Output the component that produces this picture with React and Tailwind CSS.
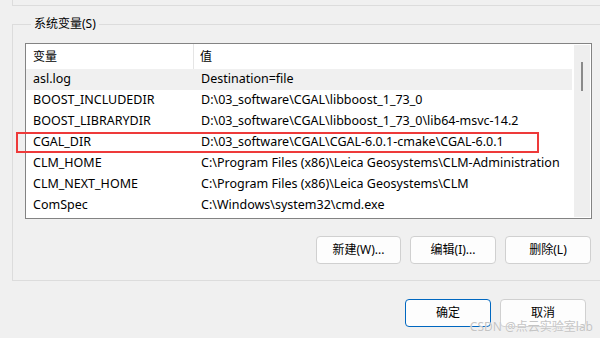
import React from "react";

const rows = [
  { name: "asl.log", value: "Destination=file", selected: true },
  { name: "BOOST_INCLUDEDIR", value: "D:\\03_software\\CGAL\\libboost_1_73_0" },
  { name: "BOOST_LIBRARYDIR", value: "D:\\03_software\\CGAL\\libboost_1_73_0\\lib64-msvc-14.2" },
  { name: "CGAL_DIR", value: "D:\\03_software\\CGAL\\CGAL-6.0.1-cmake\\CGAL-6.0.1", marked: true },
  { name: "CLM_HOME", value: "C:\\Program Files (x86)\\Leica Geosystems\\CLM-Administration" },
  { name: "CLM_NEXT_HOME", value: "C:\\Program Files (x86)\\Leica Geosystems\\CLM" },
  { name: "ComSpec", value: "C:\\Windows\\system32\\cmd.exe" },
];

const Button = ({ children, primary, className = "" }) => (
  <button
    className={`h-[28px] rounded-[4px] border bg-[#fdfdfd] text-[12px] text-black ${
      primary ? "border-[#0067c0]" : "border-[#d0d0d0]"
    } ${className}`}
  >
    {children}
  </button>
);

const App = () => {
  return (
    <div
      className="relative w-[600px] h-[338px] overflow-hidden bg-[#f0f0f0] text-[12px] text-black"
      style={{ fontFamily: '"Noto Sans", "Noto Sans CJK SC", sans-serif' }}
    >
      {/* bottom edge of the group above */}
      <div className="ml-[12px] h-[6px] w-[620px] border-l border-b border-[#dcdcdc]" />

      {/* 系统变量 group */}
      <fieldset className="mt-[10px] ml-[12px] w-[620px] border border-[#dcdcdc] pl-[12px] pb-[16px]">
        <legend className="ml-[6px] px-[3px] leading-[16px]">系统变量(S)</legend>

        <div className="mt-[11px] w-[567px] h-[176px] flex border border-[#838383] bg-white">
          <div className="flex-1 flex flex-col">
            <div className="flex h-[25px] items-center">
              <div className="w-[168px] h-full flex items-center pl-[7px] border-r border-[#e5e5e5]">变量</div>
              <div className="pl-[6px]">值</div>
            </div>
            {rows.map((r) => (
              <div
                key={r.name}
                className={`relative flex h-[21px] items-center whitespace-nowrap text-[12.5px] ${
                  r.selected ? "bg-[#f0f0f0]" : ""
                }`}
              >
                <div className="w-[168px] pl-[7px]">{r.name}</div>
                <div className="pl-[7px]">{r.value}</div>
                {r.marked && (
                  <div className="absolute left-[-10px] top-0 w-[523px] h-[21px] border-2 border-[#ee3a3a]" />
                )}
              </div>
            ))}
          </div>
          <div className="w-[19px] pl-[2px] py-[1px] pr-[1px]">
            <div className="h-full bg-[#eeeeee] pt-[17px] flex justify-center">
              <div className="w-[2px] h-[29px] bg-[#8a8a8a]" />
            </div>
          </div>
        </div>

        <div className="mt-[17px] w-[567px] flex justify-end gap-[9px] pr-[1px]">
          <Button className="w-[85px]">新建(W)...</Button>
          <Button className="w-[86px]">编辑(I)...</Button>
          <Button className="w-[86px]">删除(L)</Button>
        </div>
      </fieldset>

      <div className="mt-[18px] flex justify-end gap-[9px] pr-[14px]">
        <Button primary className="w-[86px]">确定</Button>
        <Button className="w-[86px]">取消</Button>
      </div>

      <div
        className="absolute right-[7px] bottom-[2px] text-[12px] text-[#c4c4c4]"
        style={{ textShadow: "0 0 1px #ffffff" }}
      >
        CSDN @点云实验室lab
      </div>
    </div>
  );
};

export default App;
